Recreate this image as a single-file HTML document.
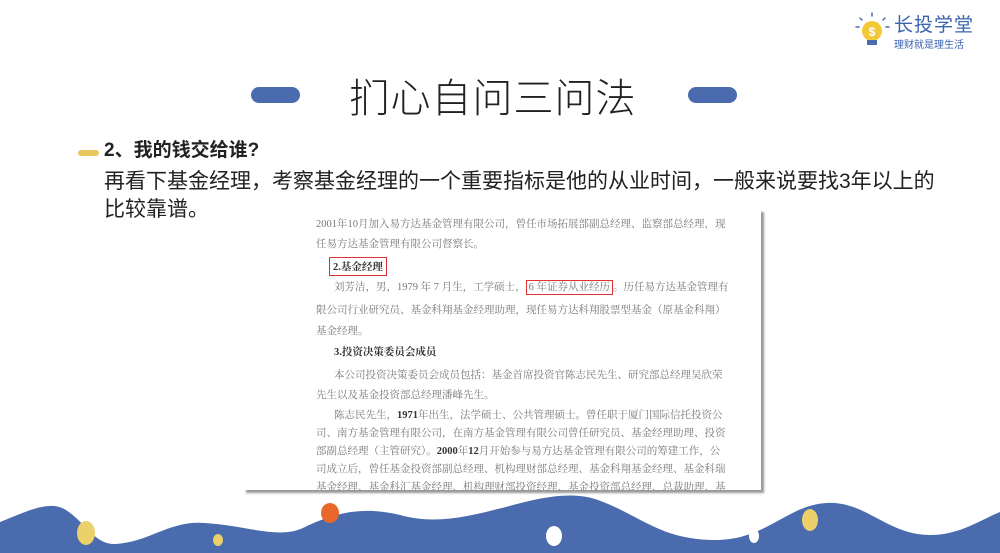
<!DOCTYPE html>
<html><head><meta charset="utf-8"><style>
body{margin:0;width:1000px;height:553px;overflow:hidden;background:#fff;position:relative;font-family:"Liberation Sans","Noto Sans CJK SC",sans-serif;}
.a{position:absolute;}
.pill{position:absolute;width:49px;height:16px;border-radius:8px;background:#4a6cae;}
.doc{position:absolute;left:243px;top:209px;width:518px;height:281px;background:#fff;box-shadow:3px 3px 2px #999;font-family:"Liberation Serif","Noto Serif CJK SC",serif;font-size:10.5px;color:#777;overflow:hidden;}
.doc p{margin:0;position:absolute;left:73px;white-space:nowrap;}
.doc b{color:#333;}
</style></head><body>
<div class="pill" style="left:251px;top:87px"></div>
<div class="pill" style="left:688px;top:87px"></div>
<div class="a" style="left:340px;top:74px;width:306px;text-align:center;font-size:40px;font-weight:300;color:#222;line-height:50px;letter-spacing:1px">扪心自问三问法</div>
<div class="a" style="left:78px;top:150px;width:21px;height:6px;border-radius:3px;background:#e9c75f"></div>
<div class="a" style="left:104px;top:139px;font-size:19px;font-weight:bold;color:#222;line-height:24px">2、我的钱交给谁?</div>
<div class="a" style="left:104px;top:168px;font-size:21px;color:#222;line-height:28px;width:880px;white-space:nowrap">再看下基金经理，考察基金经理的一个重要指标是他的从业时间，一般来说要找3年以上的<br>比较靠谱。</div>

<div class="doc">
<p style="top:7px;left:73px">2001年10月加入易方达基金管理有限公司，曾任市场拓展部副总经理、监察部总经理，现</p>
<p style="top:27px">任易方达基金管理有限公司督察长。</p>
<p style="top:48px;left:86px;border:1.5px solid #d33;padding:1px 3px;color:#333;font-weight:bold">2.基金经理</p>
<p style="top:70px;left:91px">刘芳洁，男，1979 年 7 月生，工学硕士，<span style="border:1.5px solid #d33;padding:1px 2px">6 年证券从业经历</span>。历任易方达基金管理有</p>
<p style="top:93px">限公司行业研究员、基金科翔基金经理助理，现任易方达科翔股票型基金（原基金科翔）</p>
<p style="top:114px">基金经理。</p>
<p style="top:135px;left:91px;color:#333;font-weight:bold">3.投资决策委员会成员</p>
<p style="top:158px;left:91px">本公司投资决策委员会成员包括：基金首席投资官陈志民先生、研究部总经理吴欣荣</p>
<p style="top:178px">先生以及基金投资部总经理潘峰先生。</p>
<p style="top:198px;left:91px">陈志民先生，<b>1971</b>年出生，法学硕士、公共管理硕士。曾任职于厦门国际信托投资公</p>
<p style="top:216px">司、南方基金管理有限公司，在南方基金管理有限公司曾任研究员、基金经理助理、投资</p>
<p style="top:234px">部副总经理（主管研究）。<b>2000</b>年<b>12</b>月开始参与易方达基金管理有限公司的筹建工作，公</p>
<p style="top:252px">司成立后，曾任基金投资部副总经理、机构理财部总经理、基金科翔基金经理、基金科瑞</p>
<p style="top:270px">基金经理、基金科汇基金经理、机构理财部投资经理、基金投资部总经理、总裁助理、基</p>
</div>

<svg class="a" style="left:0;top:0" width="1000" height="553">
<path d="M0,522 C30,510 50,500 66,510 C85,522 95,545 115,544 C150,542 170,520 205,523 C250,526 280,540 305,527 C330,515 360,505 400,515 C470,535 540,480 598,500 C640,515 660,540 715,540 C770,540 790,500 835,503 C870,506 890,535 930,535 C960,535 980,520 1000,512 L1000,553 L0,553Z" fill="#4a6cae"/>
<ellipse cx="86" cy="533" rx="9" ry="12" fill="#ecd06a"/>
<ellipse cx="218" cy="540" rx="5" ry="6" fill="#ecd06a"/>
<ellipse cx="330" cy="513" rx="9" ry="10" fill="#e8672a"/>
<ellipse cx="554" cy="536" rx="8" ry="10" fill="#fff"/>
<ellipse cx="754" cy="536" rx="5" ry="7" fill="#fff"/>
<ellipse cx="810" cy="520" rx="8" ry="11" fill="#ecd06a"/>
<g stroke="#4a6cae" stroke-width="1.5" stroke-linecap="round">
<line x1="856" y1="27" x2="859" y2="27"/><line x1="886" y1="27" x2="889" y2="27"/>
<line x1="860" y1="18" x2="862" y2="20"/><line x1="885" y1="18" x2="883" y2="20"/>
<line x1="872" y1="13" x2="872" y2="16"/>
</g>
<circle cx="872" cy="31" r="10" fill="#f3c83a"/>
<rect x="867" y="40" width="10" height="5" fill="#4a6cae"/>
<text x="872" y="36" font-size="12" fill="#fff" text-anchor="middle" font-family="Liberation Sans" font-weight="bold">$</text>
</svg>
<div class="a" style="left:894px;top:15px;font-size:19px;color:#3a63b0;line-height:22px;letter-spacing:1px">长投学堂</div>
<div class="a" style="left:894px;top:40px;font-size:10px;color:#3a63b0;line-height:12px">理财就是理生活</div>
</body></html>
